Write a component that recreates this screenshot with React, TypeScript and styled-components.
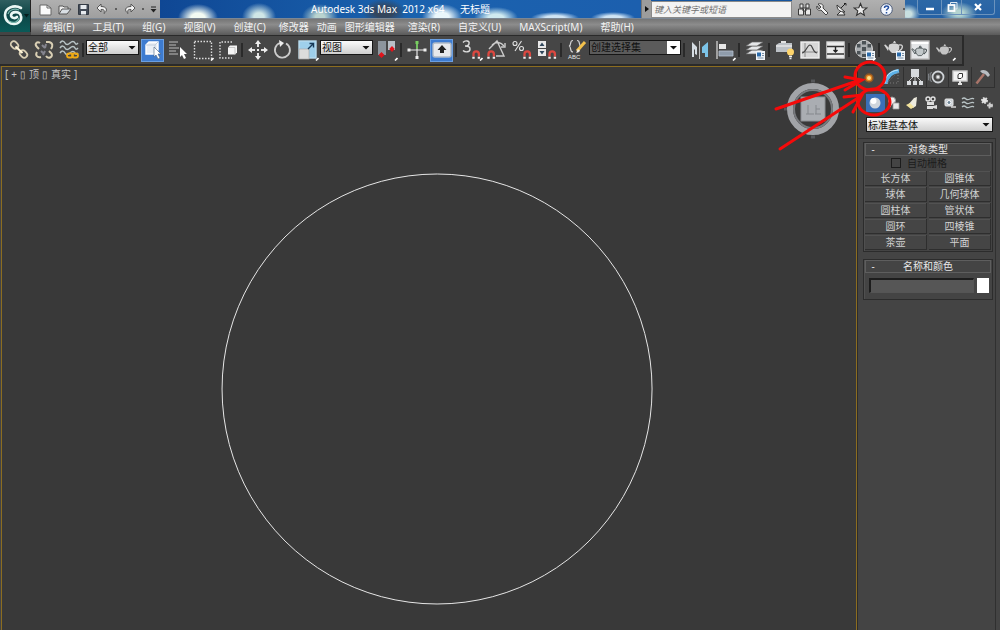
import React from "react";
import styled, { createGlobalStyle, css } from "styled-components";

const Global = createGlobalStyle`
  * { box-sizing: border-box; }
  html, body { margin: 0; background: #3a3a3a; }
  body, button, input, select {
    font-family: "Noto Sans", "Noto Sans CJK SC", sans-serif;
    font-size: 10px;
    line-height: 12px;
  }
  button { border: 0; padding: 0; margin: 0; background: none; color: inherit; }
  svg { display: block; flex: none; }
`;

const App_ = styled.div`
  position: relative;
  display: flex;
  flex-direction: column;
  min-height: 100vh;
  overflow: hidden;
  background: #444444;
  color: #e4e4e4;
`;

/* ---------- header ---------- */
const Header = styled.header`
  display: grid;
  grid-template-columns: 31px 1fr;
  height: 35px;
  background: #444;
`;
const LogoButton = styled.button`
  height: 32px;
  background: linear-gradient(#2f5f60, #0e4546 45%, #0a5a58);
  border-right: 1px solid #222;
`;
const HeaderRows = styled.div`
  display: grid;
  grid-template-rows: 19px 16px;
  min-width: 0;
`;
const TitleBar = styled.div`
  display: flex;
  min-width: 0;
  background: #15559f;
  border-bottom: 1px solid #7c8794;
`;
const IconStrip = styled.div<{ $w: number }>`
  display: flex;
  align-items: center;
  flex: none;
  width: ${(p) => p.$w}px;
  padding-left: 5px;
  background: linear-gradient(#b0b0b0, #9f9f9f);
`;
const StripButton = styled.button<{ $w?: number }>`
  display: flex;
  align-items: center;
  justify-content: center;
  width: ${(p) => p.$w ?? 19}px;
  height: 18px;
`;
const Wallpaper = styled.div`
  flex: 1;
  display: flex;
  justify-content: center;
  align-items: center;
  min-width: 0;
  color: #fff;
  white-space: pre;
  background:
    radial-gradient(ellipse 20px 14px at 38px 18px, #f2faf2 35%, transparent),
    radial-gradient(ellipse 17px 14px at 99px 17px, #cfe6e6 30%, transparent),
    radial-gradient(ellipse 18px 13px at 160px 17px, #b9d3cf 25%, transparent),
    radial-gradient(ellipse 22px 13px at 224px 12px, #33455c 40%, transparent),
    radial-gradient(ellipse 20px 13px at 282px 17px, #eaf6fb 35%, transparent),
    radial-gradient(ellipse 22px 11px at 336px 18px, #cfeaf0 35%, transparent),
    radial-gradient(ellipse 24px 6px at 395px 18px, #cfe4f4 40%, transparent),
    radial-gradient(ellipse 22px 6px at 453px 18px, #cfe4f4 40%, transparent),
    linear-gradient(90deg, #0f4794, #1a62ae 50%, #1c5fae);
`;
const SearchToggle = styled.button`
  width: 10px;
  background: #9c9c9c;
  border-left: 1px solid #777;
  display: flex;
  align-items: center;
  justify-content: center;
`;
const SearchInput = styled.input`
  width: 141px;
  flex: none;
  margin: 1px 0 0;
  padding: 1px 2px 0;
  border: 1px solid #8a8a8a;
  background: #f3f3f3;
  font-size: 9px;
  font-style: italic;
  &::placeholder { color: #707070; opacity: 1; }
`;
const WindowArea = styled.div`
  width: 95px;
  flex: none;
  padding-left: 12px;
  background:
    radial-gradient(ellipse 12px 10px at 3px 14px, #c8dfe0 30%, transparent),
    radial-gradient(ellipse 18px 11px at 54px 13px, #b4d4d0 25%, transparent),
    linear-gradient(#2d68a6, #2561a4);
`;
const WindowButtons = styled.div`
  display: grid;
  grid-template-columns: 23px 20px 1fr;
  width: 78px;
  height: 15px;
  border: 1px solid #6b93bd;
  border-top: 0;
  border-radius: 0 0 3px 3px;
`;
const WindowButton = styled.button`
  display: flex;
  align-items: center;
  justify-content: center;
  & + & { border-left: 1px solid #6b93bd; }
`;
const MenuBar = styled.nav`
  display: flex;
  align-items: center;
  padding-left: 3px;
  background: linear-gradient(#757575, #8c8c8c 35%, #5a5a5a);
`;
const MenuItem = styled.button<{ $tight?: boolean }>`
  padding: 0 ${(p) => (p.$tight ? 4 : 9)}px;
  color: #f2f2f2;
  white-space: nowrap;
`;

/* ---------- main toolbar ---------- */
const ToolbarRow = styled.div`
  height: 31px;
  display: flex;
  background: #444;
`;
const Toolbar = styled.div`
  display: flex;
  align-items: center;
  width: 964px;
  padding-left: 6px;
  background: #464646;
  border: 1px solid #2a2a2a;
  border-width: 1px 2px 2px 0;
`;
const Tool = styled.button<{ $on?: boolean }>`
  display: flex;
  align-items: center;
  justify-content: center;
  width: 23px;
  height: 23px;
  margin: 0 1px;
  flex: none;
  ${(p) => p.$on && css`background: #3d7bd0; border: 1px solid #6a9ee0;`}
`;
const Separator = styled.i`
  width: 2px;
  height: 14px;
  margin: 0 2px 0 1px;
  flex: none;
  background: #2a2a2a;
`;
const SelectBox = styled.label<{ $w?: number; $dark?: boolean }>`
  display: grid;
  flex: none;
  width: ${(p) => (p.$w ? p.$w + "px" : "auto")};
  margin: 0 1px 6px 0;
  height: 15px;
  border: 1px solid #161616;
  background: ${(p) => (p.$dark ? "#5b5b5b" : "linear-gradient(#fafafa, #cfcfcf)")};
  > * { grid-area: 1 / 1; }
  > svg { justify-self: end; align-self: center; pointer-events: none; }
`;
const Select = styled.select`
  appearance: none;
  width: 100%;
  height: 13px;
  padding: 0 12px 0 1px;
  border: 0;
  background: transparent;
  color: #101010;
`;

/* ---------- viewport ---------- */
const Main = styled.main`
  flex: 1;
  display: grid;
  grid-template-columns: 1fr 143px;
  min-height: 0;
`;
const Viewport = styled.section`
  position: relative;
  margin-left: 1px;
  border: 1px solid #8c6d20;
  border-bottom: 0;
  background: #393939;
`;
const ViewLabel = styled.div`
  display: flex;
  gap: 3px;
  padding: 1px 3px;
  color: #c4c4c4;
`;
const CircleShape = styled.svg`
  position: absolute;
  left: 219px;
  top: 105px;
`;
const ViewCube = styled.svg`
  position: absolute;
  right: 13px;
  top: 12px;
`;
const Annotation = styled.svg`
  position: absolute;
  right: 105px;
  top: 56px;
  pointer-events: none;
`;

/* ---------- command panel ---------- */
const Panel = styled.aside`
  display: flex;
  flex-direction: column;
  border-left: 1px solid #2c2c2c;
  background: #444;
`;
const PanelTabs = styled.div`
  display: grid;
  grid-template-columns: repeat(6, 1fr);
  height: 22px;
  padding: 1px 5px 0 0;
`;
const PanelTab = styled.button<{ $on?: boolean }>`
  display: flex;
  align-items: center;
  justify-content: center;
  ${(p) => !p.$on && css`border: 1px solid #303030; border-width: 0 1px 1px 0;`}
`;
const Categories = styled.div`
  display: grid;
  grid-template-columns: repeat(7, 1fr);
  padding: 0 4px 0 8px;
  margin: 6px 0 4px;
`;
const Category = styled.button<{ $on?: boolean }>`
  display: flex;
  align-items: center;
  justify-content: center;
  height: 18px;
  ${(p) => p.$on && css`background: #3a6fb8;`}
`;
const PanelSelect = styled.div`
  padding: 1px 6px 0 8px;
`;
const Rollouts = styled.div`
  flex: 1;
  margin-right: 4px;
  padding: 3px 2px 0 5px;
  border: 1px solid #303030;
  border-width: 1px 1px 0 0;
`;
const Group = styled.section`
  margin-bottom: 7px;
  padding: 0 1px 1px;
  border: 1px solid #2c2c2c;
  box-shadow: inset 1px 0 #505050;
`;
const GroupTitle = styled.button`
  display: grid;
  grid-template-columns: 10px 1fr 10px;
  width: 100%;
  height: 13px;
  padding: 0 2px;
  line-height: 10px;
  border: 1px solid #5e5e5e;
  background: #444;
  color: #e8e8e8;
`;
const AutoGrid = styled.label`
  display: flex;
  align-items: center;
  justify-content: center;
  gap: 6px;
  height: 13px;
  margin-bottom: 2px;
  padding-right: 18px;
  color: #1c1c1c;
`;
const Check = styled.input`
  appearance: none;
  width: 10px;
  height: 10px;
  margin: 0;
  border: 1px solid #1c1c1c;
  background: #444;
`;
const ObjectGrid = styled.div`
  display: grid;
  grid-template-columns: 1fr 1fr;
  gap: 1px 2px;
`;
const ObjectButton = styled.button`
  height: 15px;
  color: #d2d2d2;
  background: #454545;
  border: 1px solid #2e2e2e;
  border-width: 0 1px 1px 0;
  box-shadow: inset 0 1px #525252;
`;
const NameRow = styled.div`
  display: flex;
  gap: 3px;
  padding: 5px 2px 5px 4px;
`;
const NameInput = styled.input`
  flex: 1;
  min-width: 0;
  height: 15px;
  border: 1px solid #555;
  border-top: 2px solid #1d1d1d;
  border-left: 2px solid #1d1d1d;
  background: #565656;
  color: #eee;
`;
const Swatch = styled.button`
  width: 12px;
  height: 15px;
  background: #fff;
`;

/* ---------- icons ---------- */
const Svg = ({ s = 22, children }: { s?: number; children: React.ReactNode }) => (
  <svg width={s} height={s} viewBox={`0 0 ${s} ${s}`} fill="none" stroke="#e2e2e2" strokeWidth="1.4" aria-hidden="true">
    {children}
  </svg>
);
const Corner = () => <path d="M19 21.500l2.500-2.500" stroke="#fff" strokeWidth="1.600" />;
const Magnet = ({ x, y }: { x: number; y: number }) => (
  <g transform={`translate(${x} ${y})`}>
    <path d="M1.500 6.500V4a2.700 2.700 0 0 1 5.400 0v2.500" stroke="#dc4840" strokeWidth="2.300" />
    <path d="M.3 7.800h2.400M5.700 7.800h2.400" stroke="#eee" strokeWidth="2" />
  </g>
);
const Doc = () => (
  <g stroke="none">
    <rect x="12" y="12" width="9" height="9" fill="#f0f4f8" />
    <rect x="13" y="13.500" width="4" height="4" fill="#2c6cab" />
    <path d="M18 14h2v1h-2zM18 16h2v1h-2zM13.500 18.500h6v1h-6z" fill="#7890a8" />
  </g>
);
const Teapot = ({ c = "#d4d4d4", line = "none" }) => (
  <g fill={c} stroke={line} strokeWidth="1">
    <path d="M6 9c1-2 9-2 10 0 1 3 0 6-3 8H9c-3-2-4-5-3-8z" />
    <path d="M10 7l1-2h1l1 2z" />
    <path d="M6 12L2.500 8.500 1 9l4 6z" />
    <path d="M16 9c4-1 5 3 0 6" fill="none" stroke={line === "none" ? c : line} strokeWidth="1.300" />
  </g>
);

const I: Record<string, React.ReactNode> = {
  link: <Svg><g stroke="#d9cfb4" strokeWidth="1.800"><rect x="2.500" y="3" width="8" height="6" rx="3" transform="rotate(45 6.500 6)" /><rect x="11.500" y="12" width="8" height="6" rx="3" transform="rotate(45 15.500 15)" /><path d="M7.500 7.500l7 6.500" stroke="#fff5d8" strokeWidth="2" /></g></Svg>,
  unlink: <Svg><g stroke="#d9cfb4" strokeWidth="2"><path d="M7 4C4 2 1 5 4 8l2 2M13 3h3c4 1 4 4 2 7M4 13c-2 3 0 6 4 5M13 17c3 4 8 0 5-3l-2-2" /></g><path d="M9 6l3 3M13 5l-1 4M8 12l3 3M12 12l-2 4" stroke="#85858f" strokeWidth="2" /></Svg>,
  bind: <Svg><g stroke="#b9c4c6" strokeWidth="1.500">{[3, 8, 13].map((y) => <path key={y} d={`M2 ${y + 1}c2-3 4-2 5 0s3 2 5 0 4-2 5 0 2 1 3 0`} />)}</g><rect x="9" y="14.500" width="6" height="4" rx="2" stroke="#efaa14" strokeWidth="1.800" /><rect x="14" y="14.500" width="6" height="4" rx="2" stroke="#efaa14" strokeWidth="1.800" /></Svg>,
  pick: <Svg><path d="M4 6l3-3h9v8l-3 4H4z" fill="#e9eef5" stroke="#fff" /><path d="M4 6h9v9M13 6l3-3" stroke="#c1cddd" strokeWidth="1" /><path d="M12 8l7 7h-3l2 4-2 1-2-4-2 2z" fill="#fff" stroke="#46617f" strokeWidth=".6" /></Svg>,
  byName: <Svg><path d="M2 3h9M2 6h7M2 9h10M2 12h7M2 15h9" stroke="#bcbcbc" strokeWidth="1.200" /><path d="M13 8l7 7h-3l2 4-2 1-2-4-2 2z" fill="#fff" stroke="none" /></Svg>,
  region: <Svg><rect x="2.500" y="2.500" width="17" height="17" stroke="#dcdcdc" strokeDasharray="1.500 1.500" /><Corner /></Svg>,
  crossing: <Svg><path d="M15 3H3v16h12" stroke="#dcdcdc" strokeDasharray="1.500 1.500" /><path d="M11 8.500l2-2h7v7l-2 2h-7z" fill="#f4f4f4" stroke="none" /><path d="M11 8.500h7v7" stroke="#bbb" strokeWidth=".8" /></Svg>,
  move: <Svg><path d="M11 5v3M11 14v3M5 11h3M14 11h3" strokeWidth="2" /><path d="M11 1l3 4H8zM11 21l-3-4h6zM1 11l4-3v6zM21 11l-4 3V8z" fill="#eee" stroke="none" /><rect x="10" y="10" width="2" height="2" fill="#eee" stroke="none" /></Svg>,
  rotate: <Svg><path d="M14 4.500A7.500 7.500 0 1 1 8 4" stroke="#ccc" strokeWidth="1.800" /><path d="M7 1l5 3-4 4z" fill="#eee" stroke="none" /></Svg>,
  scale: <Svg><rect x="2" y="2" width="17" height="17" fill="#9fd0ec" stroke="#b9dcef" /><rect x="2" y="10" width="10" height="10" fill="#dcdcdc" stroke="#aaa" strokeWidth=".7" /><path d="M11 10l5-5M12.500 4.500h4v4" stroke="#183a58" /><Corner /></Svg>,
  pivot: <Svg><path d="M2 2h8v14H2z" fill="#8d959d" stroke="none" /><path d="M12 2h7v9h-7z" fill="#b9c0c7" stroke="none" /><path d="M5.500 13l3 3-3 3-3-3zM16 7l2.800 3-2.800 3-2.800-3z" fill="#e0141c" stroke="none" /><Corner /></Svg>,
  manip: <Svg><path d="M11 3v15M3 11h16" stroke="#e6e6e6" strokeWidth="1.200" /><path d="M11 5v5" stroke="#74bf62" strokeWidth="2" /><path d="M9.500 2h3v3h-3z" fill="#78d060" stroke="none" /><path d="M1.500 9.500h3v3h-3zM17.500 9.500h3v3h-3zM9.500 17h3v3h-3z" fill="#eee" stroke="none" /></Svg>,
  keyb: <Svg><rect x="2" y="4" width="18" height="14" rx="2" fill="#e7e9ec" stroke="#b0bac6" /><path d="M11 6l4.500 5H13v3H9v-3H6.500z" fill="#222" stroke="none" /></Svg>,
  percent: <Svg><circle cx="4" cy="4.500" r="2" strokeWidth="1.100" /><circle cx="10.500" cy="9.500" r="2" strokeWidth="1.100" /><path d="M10.500 2L4 12" strokeWidth="1.100" /><Magnet x={12} y={11} /></Svg>,
  angle: <Svg><path d="M3 10L11 2l7 15h-8M6 6c4-4 9-3 12 1" stroke="#ccc" /><path d="M19 4v4h-4" stroke="#ccc" /><Magnet x={1} y={11} /></Svg>,
  snap3: <Svg><path d="M2 3.500c2-2.500 7-2 6 1C8 6.500 6 7 4 7c3 0 5 1 5 3 0 3.500-5 3.500-7 1.500" stroke="#ddd" /><Magnet x={11} y={11} /><Corner /></Svg>,
  spinner: <Svg><path d="M2 2h8v7H2zM2 10h8v7H2z" fill="#e8e8e8" stroke="none" /><path d="M6 3.500L8.500 7h-5zM6 15.500L8.500 12h-5z" fill="#30475c" stroke="none" /><Magnet x={12} y={11} /></Svg>,
  curve: <Svg><rect x="2" y="3" width="18" height="16" fill="#d8d8d8" stroke="#efefef" /><path d="M6 4v14M3 13h16" stroke="#777" strokeWidth=".8" /><path d="M3 14c4 0 5-8 8-8s2 7 7 8" stroke="#444" strokeWidth="1.200" /></Svg>,
  schematic: <Svg><rect x="3" y="3" width="17" height="16" fill="#ececec" stroke="#ddd" /><path d="M3 7.500h17M3 15h17" stroke="#333" strokeWidth="1.600" /><path d="M11.500 8v5M9.500 11l2 2 2-2" stroke="#222" /></Svg>,
  ribbon: <Svg><path d="M2 6l3-2h13v9H2z" fill="#bcc1c6" stroke="none" /><path d="M7 4h5v-2H7z" fill="#e2e2e2" stroke="none" /><path d="M2 7h16" stroke="#e8e8e8" /><circle cx="16.500" cy="13" r="3.500" fill="#ffd56b" stroke="none" /><path d="M15 17.500h3M15.500 19.500h2" stroke="#eee" /></Svg>,
  layer: <Svg><g fill="#e6e8ea" stroke="#666" strokeWidth=".7"><path d="M2 15l6-4h11l-6 4z" /><path d="M2 11l6-4h11l-6 4z" /><path d="M2 7l6-4h11l-6 4z" /></g><Doc /></Svg>,
  align: <Svg><path d="M3 2v18" stroke="#ddd" strokeWidth="1.200" /><path d="M5 5h7v5H5z" fill="#e6e6e6" stroke="none" /><path d="M5 12h14v5H5z" fill="#8f9cab" stroke="#b6c2d0" strokeWidth=".8" /><Corner /></Svg>,
  mirror: <Svg><path d="M3 3l5 5v8l-2-1v-4l-1-1v8H3z" fill="#d6dde3" stroke="none" /><path d="M10.500 2v18" stroke="#bbb" strokeWidth="1" /><path d="M19 3l-6 5v6l3 0v-3l0 7h3z" fill="#7cc4e8" stroke="none" /></Svg>,
  material: <Svg><circle cx="10" cy="10" r="8.500" fill="#a9adb0" stroke="#d4d4d4" strokeWidth="1" /><path d="M8 2h4v3.500H8zM3 5h3.500v3.500H3zM8 8h4v4H8zM13.500 5H17v3.500h-3.500zM3 12h3.500v3.500H3zM8 15h4v3H8z" fill="#4b5256" stroke="none" /><Doc /><Corner /></Svg>,
  rsetup: <Svg><g transform="translate(-1 -3)"><Teapot /></g><Doc /></Svg>,
  frame: <Svg><rect x="2" y="2" width="18" height="18" fill="#e3e5e7" stroke="#bcbcbc" /><path d="M2.500 4h17" stroke="#fff" strokeWidth="2" /><g transform="translate(2 3) scale(.8)"><Teapot c="#c3c9cb" line="#414a4c" /></g></Svg>,
  render: <Svg><g transform="translate(1 1) scale(.85)"><Teapot c="#c4c4c4" /></g><Corner /></Svg>,
};

const NamedSets = () => (
  <Svg>
    <path d="M7 1.500c-4 0-1 5-4 5.500 3 .5 0 6 4 6M11 1.500c4 0 1 5 4 5.500-3 .5 0 6-4 6" stroke="#d4d4d4" strokeWidth="1.200" />
    <path d="M19 3l-8 9" stroke="#f3c14b" strokeWidth="3" /><path d="M12 10l-2 4 4-2z" fill="#eee" stroke="none" />
    <text x="2" y="20" fontSize="6" fill="#e8e8e8" stroke="none" fontFamily="Liberation Sans, sans-serif">ABC</text>
  </Svg>
);
const Arrow = () => (
  <svg width="12" height="13" viewBox="0 0 12 13" aria-hidden="true"><path d="M2.500 5h7L6 8.500z" fill="#111" /></svg>
);
const ArrowBox = () => (
  <svg width="13" height="13" viewBox="0 0 13 13" aria-hidden="true"><path d="M0 0h13v13H0z" fill="#fff" /><path d="M3 5h7L6.500 8.500z" fill="#111" /></svg>
);

const T = ({ i, label, on }: { i: string; label: string; on?: boolean }) => (
  <Tool $on={on} aria-label={label}>{I[i]}</Tool>
);

const menus: [string, boolean][] = [
  ["编辑(E)", false], ["工具(T)", false], ["组(G)", false], ["视图(V)", false], ["创建(C)", false],
  ["修改器", true], ["动画", true], ["图形编辑器", true], ["渲染(R)", false], ["自定义(U)", false],
  ["MAXScript(M)", false], ["帮助(H)", false],
];
const objects = ["长方体", "圆锥体", "球体", "几何球体", "圆柱体", "管状体", "圆环", "四棱锥", "茶壶", "平面"];

const Dot = () => <Svg s={4}><circle cx="2" cy="2" r="1" fill="#444" stroke="none" /></Svg>;

const tabIcons: [string, React.ReactNode][] = [
  ["创建", <Svg s={18}><circle cx="9" cy="9" r="4" fill="#e08420" stroke="#8a5526" strokeWidth="1.500" /><circle cx="9" cy="9" r="2" fill="#ffe28a" stroke="none" /></Svg>],
  ["修改", <Svg s={18}><path d="M3 16C3 9 8 4 16 3" stroke="#5db2e8" strokeWidth="4" /><path d="M2 15C2 8 7 3 15 2" stroke="#c5e9fb" strokeWidth="1" /><path d="M4 15h11V4z" stroke="#888" strokeWidth=".8" strokeDasharray="1 2" /></Svg>],
  ["层次", <Svg s={18}><path d="M5 1h8v8H5zM1 13h4v4H1zM7 13h4v4H7zM13 13h4v4h-4z" fill="#d7dadd" stroke="none" /><path d="M9 9v4M3 13l4-4M15 13l-4-4" stroke="#ccc" strokeWidth="1" /></Svg>],
  ["运动", <Svg s={18}><circle cx="10" cy="9" r="5.500" stroke="#cfd3d7" strokeWidth="1.800" /><circle cx="10" cy="9" r="2" fill="#e8eaec" stroke="#888" strokeWidth=".8" /><path d="M3.500 4c-2 3-2 7 0 10M1 5.500c-1 2-1 5 0 7" stroke="#8b9095" strokeWidth="1" /></Svg>],
  ["显示", <Svg s={18}><rect x="2" y="3" width="14" height="10" fill="#f3f3f3" stroke="#ccc" /><path d="M7 16h4M9 13v3" strokeWidth="2" /><path d="M7 7l1-1.500h3.500V9L10 10.500H7z" fill="#fff" stroke="#333" strokeWidth="1" /></Svg>],
  ["工具", <Svg s={18}><path d="M10 6L2.500 15.500" stroke="#a9756a" strokeWidth="2.500" /><path d="M6 3c3-2 6-1 8 1l2 3-2 2-3-3-3-1z" fill="#b9bec3" stroke="none" /></Svg>],
];
const catIcons: [string, React.ReactNode][] = [
  ["几何体", <Svg s={16}><circle cx="8" cy="8" r="5.500" fill="#cfd5dc" stroke="none" /><circle cx="6.500" cy="6" r="3" fill="#fff" stroke="none" /></Svg>],
  ["图形", <Svg s={16}><circle cx="6" cy="5.500" r="3.500" fill="#eee" stroke="#999" strokeWidth="1" /><path d="M7 8h6v6H7z" fill="#e9e9e9" stroke="#999" strokeWidth=".8" /><path d="M3 13l3-5" /></Svg>],
  ["灯光", <Svg s={16}><path d="M10 3l3-1-1 9-3 2-5-3z" fill="#eceade" stroke="none" /><path d="M2 10l4-2 4 4-3 2z" fill="#f3e39b" stroke="none" /></Svg>],
  ["摄影机", <Svg s={16}><circle cx="5" cy="4" r="2" /><circle cx="10" cy="4" r="2" /><path d="M4 7h7v3H4zM4 11h6v3H4z" fill="#ddd" stroke="none" /><path d="M10 11l4-1v4l-4-1" fill="#ddd" stroke="none" /></Svg>],
  ["辅助对象", <Svg s={16}><rect x="3" y="4" width="8" height="7" rx="1" fill="#c6ccd2" stroke="#e8e8e8" strokeWidth="1" /><circle cx="7" cy="7.500" r="2" fill="#6e8597" stroke="#fff" strokeWidth="1" /><path d="M9 12h5" /></Svg>],
  ["空间扭曲", <Svg s={16}><g stroke="#b9c4c6" strokeWidth="1.200">{[4, 8, 12].map((y) => <path key={y} d={`M2 ${y}c2-2 3-1 4 0s2 1 4 0 3-1 4 0`} />)}</g></Svg>],
  ["系统", <Svg s={16}><circle cx="5.500" cy="5.500" r="2.500" fill="#e4e4e4" strokeDasharray="1.500 1" stroke="#ddd" strokeWidth="2" /><circle cx="11" cy="10.500" r="2" fill="#ccc" strokeDasharray="1.500 1" stroke="#ccc" strokeWidth="2" /></Svg>],
];

export default function App() {
  return (
    <App_>
      <Global />
      <Header>
        <LogoButton aria-label="应用程序">
          <svg width="30" height="32" viewBox="0 0 30 32" fill="none" aria-hidden="true">
            <path d="M21 8C14 4 5 8 5 15c0 6 5 9 9 9 5 0 8-4 7-8-1-5-9-5-10-1 0 3 4 4 6 2" stroke="#eaf7f4" strokeWidth="2.600" strokeLinecap="round" />
            <path d="M19 10c-5-2-10 0-11 4M9 21c5 3 9 1 10-3" stroke="#79b8ae" strokeWidth="1.200" />
            <path d="M24 14h5l-2.500 3.500z" fill="#061e1e" />
          </svg>
        </LogoButton>
        <HeaderRows>
          <TitleBar>
            <IconStrip $w={129}>
              <StripButton aria-label="新建"><Svg s={15}><path d="M2 3h7l4 3v7H2z" fill="#fafafa" stroke="#666" strokeWidth="1" /><path d="M9 3v3h4" stroke="#666" strokeWidth="1" /></Svg></StripButton>
              <StripButton aria-label="打开"><Svg s={15}><path d="M2 12V4h4l1 1h4v2" fill="#eee" stroke="#555" strokeWidth="1" /><path d="M2 12l3-5h9l-4 5z" fill="#d9dfe5" stroke="#555" strokeWidth="1" /></Svg></StripButton>
              <StripButton aria-label="保存"><Svg s={15}><path d="M2.500 2.500h10v10h-10z" fill="#434b57" stroke="#333a44" strokeWidth="1" /><path d="M4.500 3h6v4h-6zM5 9h5v3.500H5z" fill="#e6eaee" stroke="none" /></Svg></StripButton>
              <StripButton aria-label="撤销"><Svg s={15}><path d="M6 2L2 6l4 4V7.500c3-.5 4 1 3 4 4-3 3-7-3-7z" fill="#f2f2f2" stroke="#555" strokeWidth="1" /></Svg></StripButton>
              <StripButton $w={8} aria-label="撤销列表"><Dot /></StripButton>
              <StripButton aria-label="重做"><Svg s={15}><path d="M9 2l4 4-4 4V7.500c-3-.5-4 1-3 4-4-3-3-7 3-7z" fill="#f2f2f2" stroke="#555" strokeWidth="1" /></Svg></StripButton>
              <StripButton $w={8} aria-label="重做列表"><Dot /></StripButton>
              <StripButton $w={12} aria-label="自定义快速访问"><Svg s={9}><path d="M2 2h5" stroke="#222" strokeWidth="1" /><path d="M1.500 4h6l-3 3.500z" fill="#222" stroke="none" /></Svg></StripButton>
            </IconStrip>
            <Wallpaper>{"Autodesk 3ds Max  2012 x64      无标题"}</Wallpaper>
            <SearchToggle aria-label="展开"><svg width="6" height="8" viewBox="0 0 6 8"><path d="M1 1l4 3-4 3z" fill="#111" /></svg></SearchToggle>
            <SearchInput aria-label="搜索" placeholder="键入关键字或短语" />
            <IconStrip $w={113}>
              <StripButton $w={15} aria-label="查找"><Svg s={15}><path d="M3 2h3v4H3zM9 2h3v4H9zM1.500 7h5v6h-5zM8.500 7h5v6h-5zM6 6h3v3H6z" fill="#e8e8e8" stroke="#3a3a3a" strokeWidth="1" /></Svg></StripButton>
              <StripButton $w={20} aria-label="订阅中心"><Svg s={15}><path d="M3 2l3 3-2 2-2-3c-1 3 1 5 4 4l5 5 2-2-5-5c1-3-1-5-5-4z" fill="#f3f3f3" stroke="#444" strokeWidth="1" /></Svg></StripButton>
              <StripButton aria-label="通讯中心"><Svg s={15}><path d="M3 3c0 5 3 7 8 7zM7 9l-4 4h8l-2-3" fill="#eee" stroke="#333" strokeWidth="1" /><path d="M7 6l4-4M10 1.500h2v2" stroke="#222" strokeWidth="1" /></Svg></StripButton>
              <StripButton aria-label="收藏夹"><Svg s={15}><path d="M7.500 1.500l1.700 4.200 4.500.3-3.500 2.900 1.200 4.400-3.900-2.500-3.900 2.500 1.200-4.400L1.300 6l4.500-.3z" fill="#ececec" stroke="#333" strokeWidth="1.100" /></Svg></StripButton>
              <StripButton $w={32} aria-label="帮助">
                <svg width="15" height="15" viewBox="0 0 15 15" aria-hidden="true"><circle cx="7.500" cy="7.500" r="5.800" fill="#f4f8ff" stroke="#4a5a78" /><path d="M5.500 6c0-3 4-2.500 4-.5 0 1.500-2 1.500-2 3M7.500 10v1.400" stroke="#2550a0" strokeWidth="1.500" fill="none" /></svg>
              </StripButton>
              <StripButton $w={3} aria-label="帮助菜单"><Dot /></StripButton>
            </IconStrip>
            <WindowArea>
              <WindowButtons>
                <WindowButton aria-label="最小化"><Svg s={12}><path d="M2 8h8" stroke="#fff" strokeWidth="2.500" /></Svg></WindowButton>
                <WindowButton aria-label="还原"><Svg s={12}><path d="M4.500 3V1.500H11V8H9.500" stroke="#dce8f2" strokeWidth="1" /><rect x="2.500" y="4" width="6" height="6" stroke="#fff" strokeWidth="1.800" /></Svg></WindowButton>
                <WindowButton aria-label="关闭"><Svg s={12}><path d="M3 3l6 6M9 3L3 9" stroke="#fff" strokeWidth="2.200" /></Svg></WindowButton>
              </WindowButtons>
            </WindowArea>
          </TitleBar>
          <MenuBar>
            {menus.map(([m, tight]) => <MenuItem key={m} $tight={tight}>{m}</MenuItem>)}
          </MenuBar>
        </HeaderRows>
      </Header>

      <ToolbarRow>
        <Toolbar role="toolbar">
          <T i="link" label="选择并链接" /><T i="unlink" label="断开链接" /><T i="bind" label="绑定到空间扭曲" />
          <Separator />
          <SelectBox $w={53}><Select aria-label="选择过滤器"><option>全部</option></Select><Arrow /></SelectBox>
          <T i="pick" label="选择对象" on /><T i="byName" label="按名称选择" /><T i="region" label="矩形选择区域" /><T i="crossing" label="窗口/交叉" />
          <Separator />
          <T i="move" label="移动" /><T i="rotate" label="旋转" /><T i="scale" label="缩放" />
          <SelectBox $w={53}><Select aria-label="参考坐标系"><option>视图</option></Select><Arrow /></SelectBox>
          <T i="pivot" label="使用轴点中心" />
          <Separator />
          <T i="manip" label="选择并操纵" /><T i="keyb" label="键盘快捷键覆盖" on />
          <Separator />
          <T i="snap3" label="捕捉开关" /><T i="angle" label="角度捕捉" /><T i="percent" label="百分比捕捉" /><T i="spinner" label="微调器捕捉" />
          <Separator />
          <Tool aria-label="编辑命名选择集"><NamedSets /></Tool>
          <SelectBox $w={92} $dark><Select aria-label="命名选择集"><option>创建选择集</option></Select><ArrowBox /></SelectBox>
          <Separator />
          <T i="mirror" label="镜像" /><T i="align" label="对齐" />
          <Separator />
          <T i="layer" label="层管理器" />
          <Separator />
          <T i="ribbon" label="石墨建模工具" /><T i="curve" label="曲线编辑器" /><T i="schematic" label="图解视图" />
          <Separator />
          <T i="material" label="材质编辑器" />
          <Separator />
          <T i="rsetup" label="渲染设置" /><T i="frame" label="渲染帧窗口" /><T i="render" label="渲染产品" />
        </Toolbar>
      </ToolbarRow>

      <Main>
        <Viewport>
          <ViewLabel><span>[</span><span>+</span><span>▯</span><span>顶</span><span>▯</span><span>真实</span><span>]</span></ViewLabel>
          <CircleShape width="432" height="434" viewBox="0 0 432 434" fill="none">
            <path d="M216 2a215 215 0 1 0 .1 0" stroke="#e6e6e6" strokeWidth="1" />
          </CircleShape>
          <ViewCube width="60" height="64" viewBox="0 0 60 64" fill="none">
            <circle cx="30" cy="30" r="23" stroke="#a2a4a8" strokeWidth="6" />
            <circle cx="30" cy="30" r="19" stroke="#77797d" strokeWidth="2" />
            <rect x="18" y="18" width="24" height="24" fill="#aaadb2" stroke="#8b8e93" />
            <path d="M25 26v9M23 35h8M33 26v9M33 30h4M32 35h6" stroke="#85888d" />
            <path d="M28 2h4M28 58h4M1 30h3M56 30h3" stroke="#55575a" strokeWidth="3" />
          </ViewCube>
        </Viewport>

        <Panel>
          <PanelTabs>
            {tabIcons.map(([n, ic], k) => <PanelTab key={n} $on={k === 0} aria-label={n}>{ic}</PanelTab>)}
          </PanelTabs>
          <Categories>
            {catIcons.map(([n, ic], k) => <Category key={n} $on={k === 0} aria-label={n}>{ic}</Category>)}
          </Categories>
          <PanelSelect>
            <SelectBox><Select aria-label="对象类别"><option>标准基本体</option></Select><Arrow /></SelectBox>
          </PanelSelect>
          <Rollouts>
            <Group>
              <GroupTitle><span>-</span><span>对象类型</span></GroupTitle>
              <AutoGrid><Check type="checkbox" />自动栅格</AutoGrid>
              <ObjectGrid>
                {objects.map((o) => <ObjectButton key={o}>{o}</ObjectButton>)}
              </ObjectGrid>
            </Group>
            <Group>
              <GroupTitle><span>-</span><span>名称和颜色</span></GroupTitle>
              <NameRow><NameInput aria-label="名称" /><Swatch aria-label="颜色" /></NameRow>
            </Group>
          </Rollouts>
        </Panel>
      </Main>

      <Annotation width="125" height="100" viewBox="0 0 125 100" fill="none" stroke="#f50a0a" strokeWidth="3" strokeLinecap="round">
        <ellipse cx="100" cy="20" rx="15" ry="14" />
        <ellipse cx="104" cy="46" rx="16" ry="13" />
        <path d="M6 53L90 24M75 21l17 3-17 10M10 93L91 40M74 41l18-2-9 17" />
      </Annotation>
    </App_>
  );
}
